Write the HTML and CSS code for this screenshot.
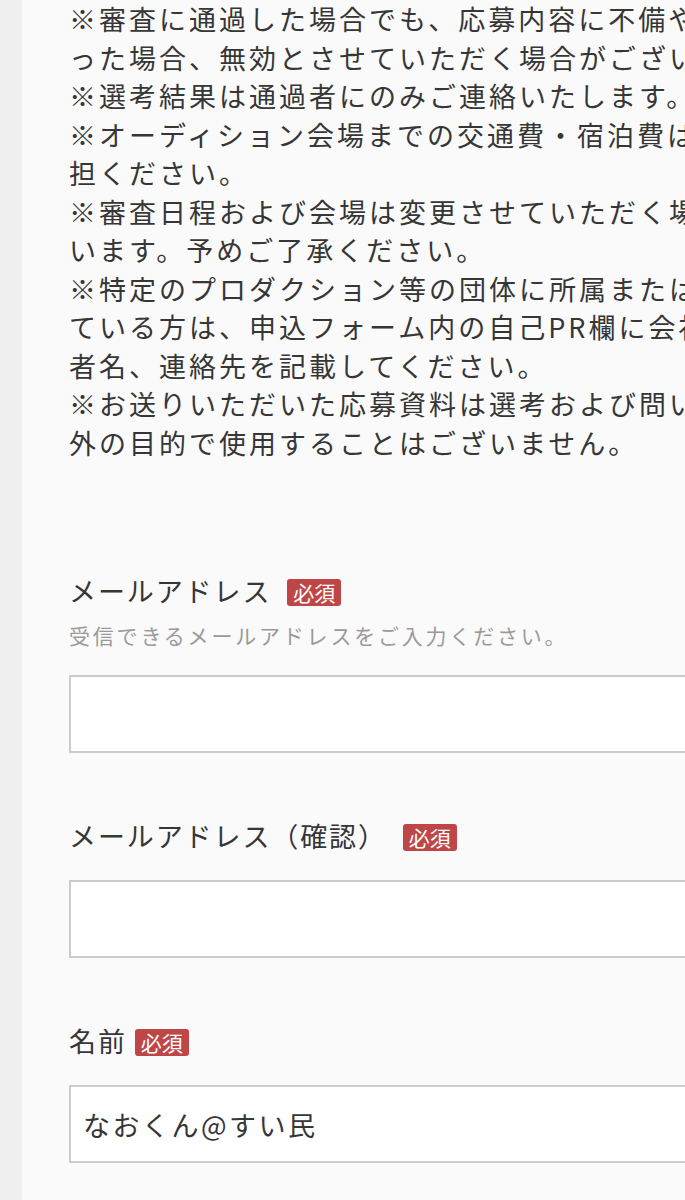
FILE: index.html
```html
<!DOCTYPE html>
<html lang="ja">
<head>
<meta charset="utf-8">
<title>応募フォーム</title>
<link rel="stylesheet" href="styles.css">
</head>
<body>
<div class="page">
  <p class="notes">※審査に通過した場合でも、応募内容に不備やその他問題があ<br>った場合、無効とさせていただく場合がございます。<br>※選考結果は通過者にのみご連絡いたします。<br>※オーディション会場までの交通費・宿泊費は各自ご負<br>担ください。<br>※審査日程および会場は変更させていただく場合がござ<br>います。予めご了承ください。<br>※特定のプロダクション等の団体に所属または契約し<br>ている方は、申込フォーム内の自己PR欄に会社名、担当<br>者名、連絡先を記載してください。<br>※お送りいただいた応募資料は選考および問い合わせ以<br>外の目的で使用することはございません。</p>

  <div class="field">
    <div class="label label-with-help">メールアドレス <span class="badge">必須</span></div>
    <div class="help">受信できるメールアドレスをご入力ください。</div>
    <div class="input"></div>
  </div>

  <div class="field">
    <div class="label">メールアドレス（確認） <span class="badge">必須</span></div>
    <div class="input"></div>
  </div>

  <div class="field">
    <div class="label">名前<span class="badge">必須</span></div>
    <div class="input">なおくん@すい民</div>
  </div>
</div>
</body>
</html>
```

FILE: styles.css
```css
html, body {
  margin: 0;
  padding: 0;
  overflow: hidden;
  background: #efefef;
}

body {
  font-family: "Noto Sans CJK JP", "Noto Sans", sans-serif;
  color: #363636;
  width: 685px;
  height: 1200px;
}

.page {
  margin-left: 22px;
  width: 900px;
  min-height: 1200px;
  background: #fafafa;
  padding-left: 47px;
  box-sizing: border-box;
}

.notes {
  margin: 0;
  font-size: 27px;
  line-height: 38.5px;
  letter-spacing: 3px;
  white-space: nowrap;
  color: #363636;
}

.field {
  margin-top: 62.5px;
}

.notes + .field {
  margin-top: 108.5px;
}

.label {
  display: flex;
  align-items: center;
  height: 40px;
  font-size: 27px;
  letter-spacing: 1.9px;
  white-space: pre;
  color: #363636;
  margin-bottom: 24.5px;
}

.label-with-help {
  margin-bottom: 9.5px;
}

.badge {
  display: inline-flex;
  align-items: center;
  justify-content: center;
  width: 54px;
  height: 27px;
  margin-left: 8px;
  margin-top: 4px;
  background: #bf4646;
  color: #ffffff;
  border-radius: 3px;
  font-size: 21px;
  letter-spacing: 0;
  line-height: 1;
}

.help {
  font-size: 21px;
  line-height: 30px;
  letter-spacing: 2.8px;
  color: #9a9a9a;
  margin-bottom: 25px;
  white-space: nowrap;
}

.input {
  width: 760px;
  height: 78px;
  box-sizing: border-box;
  border: 2px solid #cbcbcb;
  background: #ffffff;
  padding-left: 12px;
  display: flex;
  align-items: center;
  font-size: 27px;
  letter-spacing: 2.5px;
  color: #363636;
  white-space: nowrap;
}
```
